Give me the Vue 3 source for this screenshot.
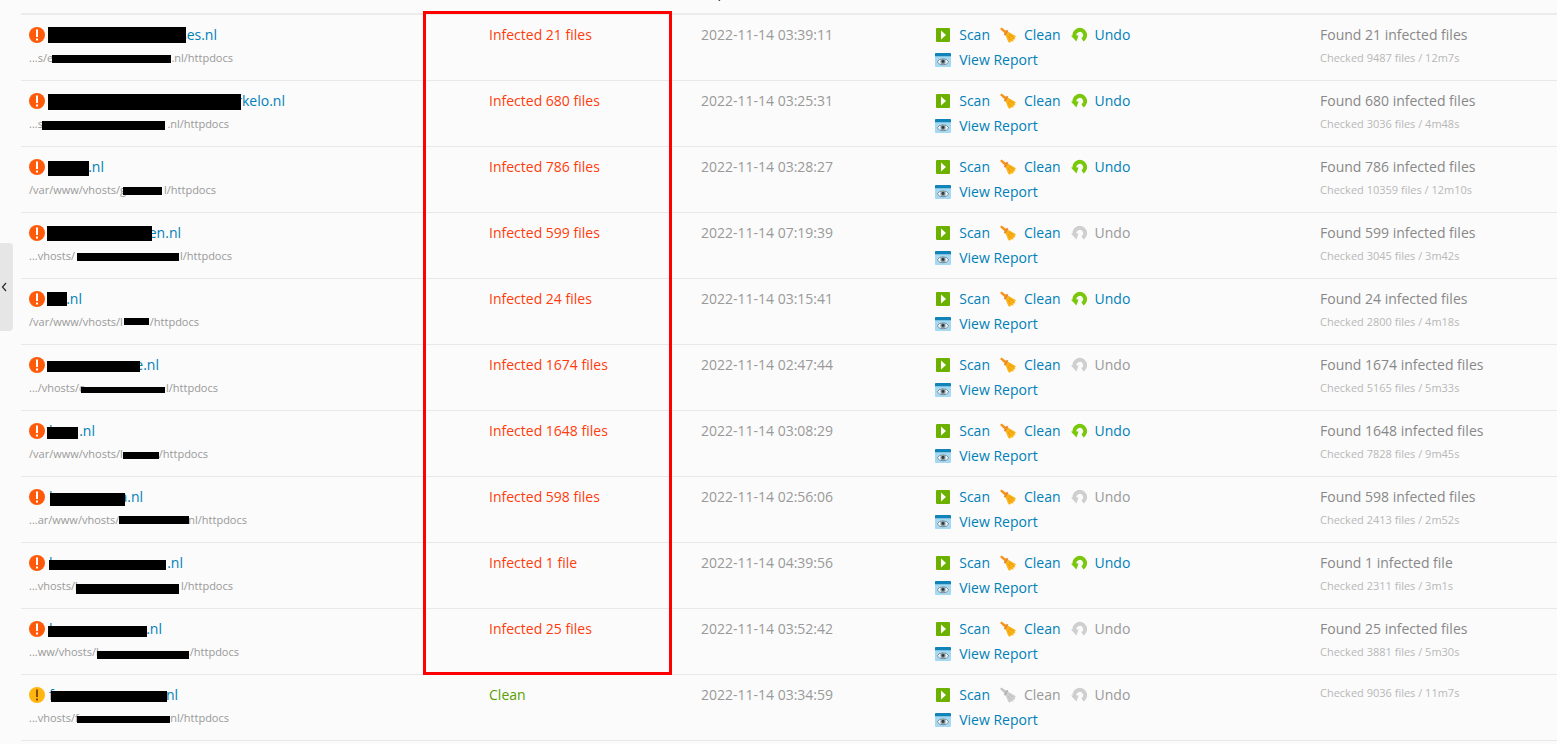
<template>
  <main class="page">
    <button class="sidebar-toggle" aria-label="Toggle sidebar">
      <svg width="6" height="10" viewBox="0 0 6 10">
        <path d="M5 1 L1.5 5 L5 9" fill="none" stroke="#333" stroke-width="1.3" />
      </svg>
    </button>

    <div class="list">
      <table class="domains">
        <colgroup>
          <col class="col-domain" />
          <col class="col-status" />
          <col class="col-date" />
          <col class="col-actions" />
          <col />
        </colgroup>
        <thead>
          <tr>
            <th></th>
            <th></th>
            <th>Report</th>
            <th></th>
            <th></th>
          </tr>
        </thead>
        <tbody>
          <tr v-for="row in rows" :key="row.date">
            <td>
              <div class="domain">
                <svg class="state-icon" width="16" height="16" viewBox="0 0 16 16">
                  <circle cx="8" cy="8" r="8" :fill="row.clean ? '#ffb710' : '#ff5a0a'" />
                  <path
                    d="M7 2.5 h2 v7.5 h-2 z M7 11.5 h2 v2 h-2 z"
                    :fill="row.clean ? '#8a4a10' : '#fff'"
                  />
                </svg>
                <a href="#" class="name" :style="{ width: row.nameWidth + 'px' }">
                  <span>{{ row.name[0] }}</span>
                  <span>{{ row.name[1] }}</span>
                </a>
                <span class="mask" :style="box(row.nameMask)"></span>
              </div>
              <div class="path" :style="{ width: row.pathWidth + 'px' }">
                <span>{{ row.path[0] }}</span>
                <span>{{ row.path[1] }}</span>
                <span class="mask" :style="box(row.pathMask)"></span>
              </div>
            </td>
            <td :class="row.clean ? 'clean' : 'infected'">
              {{ row.clean ? "Clean" : "Infected " + row.found }}
            </td>
            <td class="date">2022-11-14 {{ row.date }}</td>
            <td>
              <div class="actions">
                <a href="#" class="action">
                  <svg width="16" height="16" viewBox="0 0 16 16">
                    <rect x="1" y="1" width="14" height="14" rx="1" fill="#6cb100" />
                    <path d="M6 3.5 L11 8 L6 12.5 Z" fill="#fff" />
                  </svg>
                  Scan
                </a>
                <component
                  :is="row.clean ? 'span' : 'a'"
                  :href="row.clean ? null : '#'"
                  class="action"
                  :class="{ disabled: row.clean }"
                >
                  <svg width="16" height="16" viewBox="0 0 16 16">
                    <path
                      d="M0 2 L1.6 0.6 L6.6 4.2 L4.8 6.6 Z"
                      :fill="row.clean ? '#c4c4c4' : '#f7941d'"
                    />
                    <path
                      d="M6.4 5.2 L8.6 5 L16 9.2 L14.8 10.6 L15.4 12 L13.6 12.6 L13.2 14.4 L11.4 14.2 L9.6 15.8 L8.2 14.8 L5.8 8.8 Z"
                      :fill="row.clean ? '#cfcfcf' : '#fbb316'"
                    />
                    <path
                      d="M7.6 3.2 L4.6 8.2"
                      fill="none"
                      :stroke="row.clean ? '#b4b4b4' : '#e8862a'"
                      stroke-width="2"
                    />
                    <path
                      d="M9 7.4 L13.4 10.4 M8 9 L10.6 13"
                      fill="none"
                      :stroke="row.clean ? '#b4b4b4' : '#e08a10'"
                      stroke-width="0.7"
                    />
                  </svg>
                  Clean
                </component>
                <component
                  :is="row.undo ? 'a' : 'span'"
                  :href="row.undo ? '#' : null"
                  class="action"
                  :class="{ disabled: !row.undo }"
                >
                  <svg width="16" height="16" viewBox="0 0 16 16">
                    <path
                      d="M3.8 10 A5.3 5.3 0 1 1 11.4 12.8"
                      fill="none"
                      :stroke="row.undo ? '#7ac70c' : '#cfcfcf'"
                      stroke-width="4"
                    />
                    <path d="M0 8.6 L7.6 8.6 L5.4 14.6 Z" :fill="row.undo ? '#7ac70c' : '#cfcfcf'" />
                  </svg>
                  Undo
                </component>
              </div>
              <div class="actions">
                <a href="#" class="action">
                  <svg width="16" height="16" viewBox="0 0 16 16">
                    <rect x="0" y="1" width="16" height="14" rx="1" fill="#a5d9f2" />
                    <path d="M0 4.2 V2 Q0 1 1 1 H15 Q16 1 16 2 V4.2 Z" fill="#1183b8" />
                    <path
                      d="M2.2 9.8 Q4 6.8 8 6.8 T13.8 9.8 Q12 12.8 8 12.8 T2.2 9.8 Z"
                      fill="#f4f8fa"
                      stroke="#7b8a92"
                      stroke-width="1"
                    />
                    <circle cx="8" cy="9.6" r="2.6" fill="#7f96a3" />
                    <circle cx="8" cy="9.4" r="1.3" fill="#2a363e" />
                  </svg>
                  View Report
                </a>
              </div>
            </td>
            <td>
              <div v-if="row.found" class="found">Found {{ row.found.replace("file", "infected file") }}</div>
              <div class="checked">Checked {{ row.checked }}</div>
            </td>
          </tr>
        </tbody>
      </table>
      <div class="highlight"></div>
    </div>
  </main>
</template>

<script setup>
// masks are [left, top, width, height] inside their line
const rows = [
  { name: ["", "ses.nl"], nameWidth: 168, nameMask: [19, 5, 138, 16], path: ["...s/e", ".nl/httpdocs"], pathWidth: 204, pathMask: [23, 8, 119, 8], found: "21 files", date: "03:39:11", undo: true, checked: "9487 files / 12m7s" },
  { name: ["", "rkelo.nl"], nameWidth: 236, nameMask: [19, 6, 193, 16], path: ["...s", ".nl/httpdocs"], pathWidth: 200, pathMask: [13, 8, 123, 9], found: "680 files", date: "03:25:31", undo: true, checked: "3036 files / 4m48s" },
  { name: ["", ".nl"], nameWidth: 55, nameMask: [19, 7, 41, 15], path: ["/var/www/vhosts/g", "l/httpdocs"], pathWidth: 187, pathMask: [94, 8, 39, 8], found: "786 files", date: "03:28:27", undo: true, checked: "10359 files / 12m10s" },
  { name: ["", "en.nl"], nameWidth: 132, nameMask: [18, 6, 105, 15], path: ["...vhosts/", "l/httpdocs"], pathWidth: 203, pathMask: [48, 8, 102, 8], found: "599 files", date: "07:19:39", undo: false, checked: "3045 files / 3m42s" },
  { name: ["", ".nl"], nameWidth: 33, nameMask: [18, 6, 20, 14], path: ["/var/www/vhosts/l", "/httpdocs"], pathWidth: 170, pathMask: [95, 7, 25, 7], found: "24 files", date: "03:15:41", undo: true, checked: "2800 files / 4m18s" },
  { name: ["", "e.nl"], nameWidth: 110, nameMask: [18, 9, 93, 11], path: [".../vhosts/c", "l/httpdocs"], pathWidth: 189, pathMask: [52, 10, 84, 6], found: "1674 files", date: "02:47:44", undo: false, checked: "5165 files / 5m33s" },
  { name: ["l", ".nl"], nameWidth: 46, nameMask: [18, 9, 31, 12], path: ["/var/www/vhosts/l", "/httpdocs"], pathWidth: 179, pathMask: [94, 9, 36, 7], found: "1648 files", date: "03:08:29", undo: true, checked: "7828 files / 9m45s" },
  { name: ["l", "a.nl"], nameWidth: 94, nameMask: [21, 9, 75, 13], path: ["...ar/www/vhosts/", "nl/httpdocs"], pathWidth: 218, pathMask: [90, 7, 70, 8], found: "598 files", date: "02:56:06", undo: false, checked: "2413 files / 2m52s" },
  { name: ["l", ".nl"], nameWidth: 134, nameMask: [20, 10, 117, 10], path: ["...vhosts/l", "l/httpdocs"], pathWidth: 204, pathMask: [47, 9, 103, 10], found: "1 file", date: "04:39:56", undo: true, checked: "2311 files / 3m1s" },
  { name: ["l", ".nl"], nameWidth: 113, nameMask: [19, 10, 99, 11], path: ["...ww/vhosts/l", "/httpdocs"], pathWidth: 210, pathMask: [68, 10, 92, 8], found: "25 files", date: "03:52:42", undo: false, checked: "3881 files / 5m30s" },
  { name: ["f", "nl"], nameWidth: 129, nameMask: [22, 9, 116, 11], path: ["...vhosts/f", "nl/httpdocs"], pathWidth: 200, pathMask: [48, 9, 93, 7], clean: true, date: "03:34:59", undo: false, checked: "9036 files / 11m7s" },
];

const box = ([left, top, width, height]) => ({
  left: left + "px",
  top: top + "px",
  width: width + "px",
  height: height + "px",
});
</script>

<style>
body {
  margin: 0;
  background: #fbfbfb;
}
</style>

<style scoped>
.page {
  position: relative;
  min-height: 100vh;
  overflow: hidden;
  padding-left: 21px;
  box-sizing: border-box;
  font-family: "Open Sans", sans-serif;
  font-size: 14px;
  line-height: 25px;
  color: #999;
}
.sidebar-toggle {
  position: absolute;
  left: 0;
  top: 243px;
  width: 13px;
  height: 88px;
  padding: 0 0 0 1px;
  border: 0;
  border-radius: 0 4px 4px 0;
  background: #e6e6e6;
  display: flex;
  align-items: center;
}
.list {
  position: relative;
  margin-top: -18px;
}
.domains {
  width: 100%;
  table-layout: fixed;
  border-collapse: separate;
  border-spacing: 0;
}
.col-domain {
  width: 29.95%;
}
.col-status {
  width: 13.8%;
}
.col-date {
  width: 15.25%;
}
.col-actions {
  width: 25.05%;
}
th {
  height: 31px;
  padding: 0 8px;
  line-height: 20px;
  font-weight: 400;
  text-align: left;
  vertical-align: top;
  color: #222;
  border-bottom: 2px solid #ebebeb;
}
td {
  padding: 7px 8px 8px;
  vertical-align: top;
  white-space: nowrap;
  border-bottom: 1px solid #e8e8e8;
}
.domain {
  position: relative;
  display: flex;
  align-items: center;
  gap: 4px;
  height: 25px;
}
.name {
  display: flex;
  justify-content: space-between;
}
a {
  color: #0080b8;
  text-decoration: none;
}
.path {
  position: relative;
  display: flex;
  justify-content: space-between;
  font-size: 11px;
  line-height: 22px;
}
.mask {
  position: absolute;
  background: #000;
}
.infected {
  color: #ff3c0c;
}
.clean {
  color: #5a9e00;
}
.actions {
  display: flex;
  gap: 10px;
}
.action {
  display: flex;
  align-items: center;
  gap: 8px;
}
.disabled {
  color: #999;
}
.found {
  color: #888;
}
.checked {
  font-size: 11px;
  line-height: 22px;
  color: #b8b8b8;
}
.highlight {
  position: absolute;
  left: 26.17%;
  top: 29px;
  width: 16.2%;
  height: 664px;
  box-sizing: border-box;
  border: 3px solid #f00;
}
</style>
